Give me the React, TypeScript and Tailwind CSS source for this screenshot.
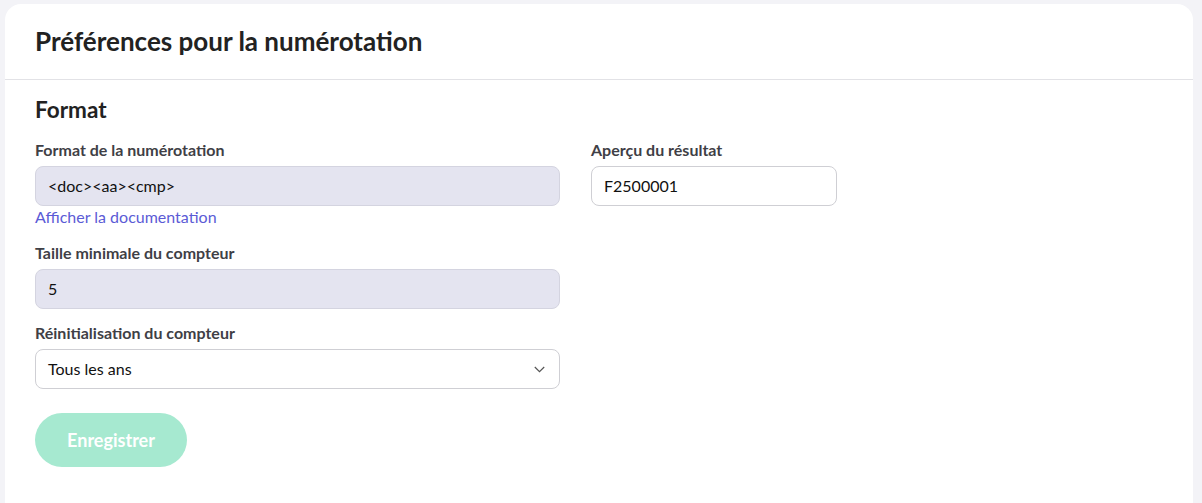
import React from "react";

export default function App() {
  return (
    <div className="min-h-[503px] bg-[#f3f3f7] pt-[4px] pl-[5px] pr-[9px] overflow-hidden" style={{ fontFamily: "Lato, 'Noto Sans', sans-serif" }}>
      <div className="bg-white rounded-t-[16px] min-h-[520px]">
        <div className="h-[76px] flex items-center px-[30px] border-b border-[#e2e2e6]">
          <h1 className="text-[26px] font-bold text-[#222222]">Préférences pour la numérotation</h1>
        </div>
        <div className="px-[30px] pt-[14px]">
          <h2 className="text-[22.5px] font-bold text-[#222222] leading-[32px]">Format</h2>
          <div className="flex gap-[31px] mt-[12px]">
            <div className="w-[525px] flex flex-col">
              <label className="text-[16px] font-bold text-[#3f3f46] leading-[24px]">Format de la numérotation</label>
              <div className="mt-[4px] h-[40px] rounded-[8px] bg-[#e4e4f0] border border-[#d4d4e0] flex items-center px-[12px] text-[16px] text-[#111111]">
                &lt;doc&gt;&lt;aa&gt;&lt;cmp&gt;
              </div>
              <a className="text-[16px] text-[#5b5bd6] leading-[22px]">Afficher la documentation</a>
              <label className="text-[16px] font-bold text-[#3f3f46] leading-[24px] mt-[13px]">Taille minimale du compteur</label>
              <div className="mt-[4px] h-[40px] rounded-[8px] bg-[#e4e4f0] border border-[#d4d4e0] flex items-center px-[12px] text-[16px] text-[#111111]">
                5
              </div>
              <label className="text-[16px] font-bold text-[#3f3f46] leading-[24px] mt-[12px]">Réinitialisation du compteur</label>
              <div className="mt-[4px] h-[40px] rounded-[8px] bg-white border border-[#cfcfd4] flex items-center justify-between pl-[12px] pr-[14px] text-[16px] text-[#111111]">
                <span>Tous les ans</span>
                <svg width="11" height="7" viewBox="0 0 11 7" fill="none" stroke="#555" strokeWidth="1.2">
                  <path d="M0.8 1l4.7 4.7 4.7-4.7" />
                </svg>
              </div>
              <button className="mt-[24px] w-[152px] h-[54px] rounded-full bg-[#a6e9d0] text-white text-[18px] font-bold">
                Enregistrer
              </button>
            </div>
            <div className="w-[246px] flex flex-col">
              <label className="text-[16px] font-bold text-[#3f3f46] leading-[24px]">Aperçu du résultat</label>
              <div className="mt-[4px] h-[40px] rounded-[8px] bg-white border border-[#cfcfd4] flex items-center px-[12px] text-[16px] text-[#111111]">
                F2500001
              </div>
            </div>
          </div>
        </div>
      </div>
    </div>
  );
}
